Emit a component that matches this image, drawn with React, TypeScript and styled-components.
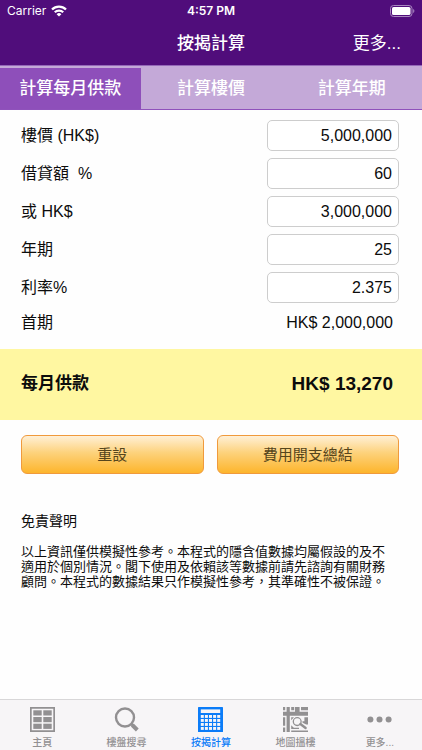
import React, { useState } from "react";
import styled, { createGlobalStyle } from "styled-components";

const GlobalStyle = createGlobalStyle`
  *, *::before, *::after { box-sizing: border-box; }
  body {
    margin: 0;
    background: #fefefe;
    color: #0c0c0c;
    font-family: "Liberation Sans", "Noto Sans CJK TC", sans-serif;
  }
  button, input { font-family: inherit; margin: 0; }
`;

const Page = styled.div`
  display: flex;
  flex-direction: column;
  min-height: 100vh;
`;

const Header = styled.header`
  background: #500d7b;
  color: #fff;
`;

const StatusBar = styled.div`
  display: grid;
  grid-template-columns: 1fr auto 1fr;
  align-items: center;
  height: 22px;
  padding: 0 7px;
  font: 500 12px/22px Inter, sans-serif;
`;

const Carrier = styled.div`
  display: flex;
  align-items: center;
  gap: 5px;
  font-weight: 400;
`;

const Clock = styled.div`
  font-weight: 600;
`;

const BatteryIcon = styled.svg`
  justify-self: end;
`;

const NavBar = styled.div`
  display: grid;
  grid-template-columns: 1fr auto 1fr;
  align-items: center;
  height: 43px;
  padding: 0 21px;
`;

const Title = styled.h1`
  grid-column: 2;
  margin: 0;
  font-size: 17px;
  line-height: 24px;
  font-weight: 500;
`;

const MoreButton = styled.button`
  justify-self: end;
  padding: 0;
  border: 0;
  background: none;
  color: #fff;
  font-size: 17px;
  line-height: 24px;
`;

const Segments = styled.div`
  display: grid;
  grid-template-columns: repeat(3, 1fr);
  height: 45px;
  padding-top: 2px;
  background: #c4a9d8;
  border-top: 1px solid #9467b8;
  border-bottom: 1px solid #8f52bb;
`;

const Segment = styled.button<{ $active: boolean }>`
  padding: 0;
  border: 0;
  background: ${(p) => (p.$active ? "#8e4fba" : "transparent")};
  color: #fff;
  font-size: 17px;
  line-height: 24px;
  font-weight: 500;
`;

const Form = styled.form`
  display: grid;
  gap: 7px;
  padding: 10px 23px 13px 21px;
`;

const Row = styled.div`
  display: grid;
  grid-template-columns: 13fr 7fr;
  align-items: center;
  min-height: 31px;
  font-size: 16px;
  line-height: 24px;
`;

const RowLabel = styled.label`
  white-space: pre;
`;

const Field = styled.input`
  width: 100%;
  height: 31px;
  padding: 0 6px;
  border: 1px solid #cdcdcd;
  border-radius: 5px;
  background: #fff;
  color: #0c0c0c;
  font-size: 16px;
  text-align: right;
`;

const SummaryRow = styled.div`
  display: flex;
  align-items: center;
  justify-content: space-between;
  height: 26px;
  padding-right: 6px;
  font-size: 16px;
  line-height: 24px;
`;

const Result = styled.section`
  display: flex;
  align-items: center;
  justify-content: space-between;
  height: 71px;
  padding: 0 29px 2px 21px;
  background: #fff7a1;
  font-weight: 700;
`;

const ResultLabel = styled.span`
  font-size: 17px;
  line-height: 24px;
  font-weight: 700;
`;

const ResultValue = styled.output`
  font-size: 19px;
  line-height: 24px;
`;

const Actions = styled.div`
  display: grid;
  grid-template-columns: 1fr 1fr;
  gap: 13px;
  padding: 15px 23px 0 21px;
`;

const ActionButton = styled.button`
  height: 39px;
  padding: 0;
  border: 1px solid #f09a3c;
  border-radius: 6px;
  background: linear-gradient(#fff0d6, #fdd27c 45%, #fdb52c);
  color: #56451c;
  font-size: 15px;
  line-height: 24px;
`;

const Disclaimer = styled.section`
  flex: 1;
  padding: 37px 31px 16px 21px;
`;

const DisclaimerTitle = styled.h2`
  margin: 0 0 13px;
  font-size: 14px;
  line-height: 20px;
  font-weight: 400;
`;

const DisclaimerText = styled.p`
  margin: 0;
  font-size: 13px;
  line-height: 15px;
`;

const TabBar = styled.nav`
  display: grid;
  grid-template-columns: repeat(5, 1fr);
  height: 51px;
  border-top: 1px solid #d8d7d8;
  background: #f7f5f7;
`;

const TabItem = styled.a<{ $active: boolean }>`
  display: flex;
  flex-direction: column;
  align-items: center;
  gap: 3px;
  padding-top: 7px;
  color: ${(p) => (p.$active ? "#0b7cf8" : "#929092")};
  font-size: 10px;
  line-height: 15px;
  font-weight: 500;
  text-decoration: none;
`;

const WifiIcon = () => (
  <svg width="16" height="12" viewBox="0 0 16 12" fill="none" stroke="#fff" strokeWidth="2.3" aria-hidden="true">
    <path d="M1 4.5a10 10 0 0 1 14 0" />
    <path d="M3.8 7.3a6 6 0 0 1 8.4 0" />
    <path d="M8 11.6 5.6 9.2a3.5 3.5 0 0 1 4.8 0Z" fill="#fff" stroke="none" />
  </svg>
);

const Battery = () => (
  <BatteryIcon width="25" height="12" viewBox="0 0 25 12" aria-hidden="true">
    <rect x="0.5" y="0.5" width="21.5" height="11" rx="3" fill="none" stroke="#a887bf" />
    <rect x="2" y="2" width="18.5" height="8" rx="1.6" fill="#fff" />
    <path d="M23.2 4v4c1.6-.6 1.6-3.4 0-4Z" fill="#a887bf" />
  </BatteryIcon>
);

const HomeIcon = () => (
  <svg width="25" height="25" viewBox="0 0 25 25" fill="currentColor" aria-hidden="true">
    <path d="M0 0h25v25H0ZM1.7 1.7v21.6h21.6V1.7Z" fillRule="evenodd" />
    {[3.3, 10, 16.7].map((y) => (
      <g key={y}>
        <rect x="3.3" y={y} width="8.4" height="5.2" />
        <rect x="13.3" y={y} width="8.4" height="5.2" />
      </g>
    ))}
  </svg>
);

const SearchIcon = () => (
  <svg width="25" height="25" viewBox="0 0 25 25" fill="none" stroke="currentColor" aria-hidden="true">
    <circle cx="11" cy="10.5" r="9" strokeWidth="2.4" />
    <path d="m17.2 16.8 1.8 1.8" strokeWidth="2.6" />
    <path d="m18.3 18 5 5" strokeWidth="4" />
  </svg>
);

const CalculatorIcon = () => (
  <svg width="25" height="25" viewBox="0 0 25 25" aria-hidden="true">
    <rect width="25" height="25" rx="0.6" fill="currentColor" />
    <rect x="2.8" y="2.4" width="19.4" height="3.6" fill="#f7f5f7" />
    {[8, 12, 16, 20].map((y) =>
      [2.8, 6.9, 11, 15.1, 19.2].map((x) => (
        <rect key={`${x}-${y}`} x={x} y={y} width="3" height="2.9" fill="#f7f5f7" />
      )),
    )}
  </svg>
);

const MapIcon = () => (
  <svg width="25" height="25" viewBox="0 0 25 25" fill="currentColor" aria-hidden="true">
    <path d="M0 0h2.2v3.2H0ZM3.6 0h3.2v25H3.6ZM8.2 0h3v3.2h-3ZM12 0h4.6v5H12ZM18 0h7v3.2h-7ZM0 4.7h25v4H0ZM0 10.2h2.2v8.6H0ZM0 20.4h2.2V25H0Z" />
    <path d="M8.2 10.2H11l-2.8 3ZM8.2 18.2l2.6 2.6H16V22H8.2ZM8.2 23.4H25V25H8.2ZM19.4 14.2h2V10.2H25v7.2h-1.8l-3.6-1.6Z" />
    <circle cx="14.2" cy="14.6" r="3.9" fill="none" stroke="currentColor" strokeWidth="1.3" />
    <path d="m17.4 17 5.2 4" fill="none" stroke="currentColor" strokeWidth="2.4" strokeLinecap="round" />
  </svg>
);

const MoreIcon = () => (
  <svg width="25" height="25" viewBox="0 0 25 25" fill="currentColor" aria-hidden="true">
    <circle cx="3.4" cy="12.5" r="3" />
    <circle cx="12.5" cy="12.5" r="3" />
    <circle cx="21.6" cy="12.5" r="3" />
  </svg>
);

const segments = ["計算每月供款", "計算樓價", "計算年期"];

const fields = [
  { id: "price", label: "樓價 (HK$)", value: "5,000,000" },
  { id: "percent", label: "借貸額  %", value: "60" },
  { id: "amount", label: "或 HK$", value: "3,000,000" },
  { id: "years", label: "年期", value: "25" },
  { id: "rate", label: "利率%", value: "2.375" },
];

const tabs = [
  { id: "home", label: "主頁", Icon: HomeIcon },
  { id: "search", label: "樓盤搜尋", Icon: SearchIcon },
  { id: "mortgage", label: "按揭計算", Icon: CalculatorIcon },
  { id: "map", label: "地圖搵樓", Icon: MapIcon },
  { id: "more", label: "更多...", Icon: MoreIcon },
];

export default function App() {
  const [segment, setSegment] = useState(0);

  return (
    <Page lang="zh-Hant">
      <GlobalStyle />
      <Header>
        <StatusBar>
          <Carrier>
            Carrier
            <WifiIcon />
          </Carrier>
          <Clock>4:57 PM</Clock>
          <Battery />
        </StatusBar>
        <NavBar>
          <Title>按揭計算</Title>
          <MoreButton type="button">更多...</MoreButton>
        </NavBar>
      </Header>
      <Segments>
        {segments.map((label, i) => (
          <Segment key={label} type="button" $active={i === segment} aria-pressed={i === segment} onClick={() => setSegment(i)}>
            {label}
          </Segment>
        ))}
      </Segments>
      <main>
        <Form id="mortgage-form">
          {fields.map((f) => (
            <Row key={f.id}>
              <RowLabel htmlFor={f.id}>{f.label}</RowLabel>
              <Field id={f.id} type="text" inputMode="decimal" defaultValue={f.value} />
            </Row>
          ))}
          <SummaryRow>
            <span>首期</span>
            <span>HK$ 2,000,000</span>
          </SummaryRow>
        </Form>
        <Result>
          <ResultLabel>每月供款</ResultLabel>
          <ResultValue>HK$ 13,270</ResultValue>
        </Result>
        <Actions>
          <ActionButton type="reset" form="mortgage-form">重設</ActionButton>
          <ActionButton type="button">費用開支總結</ActionButton>
        </Actions>
      </main>
      <Disclaimer>
        <DisclaimerTitle>免責聲明</DisclaimerTitle>
        <DisclaimerText>
          以上資訊僅供模擬性參考。本程式的隱含值數據均屬假設的及不適用於個別情況。閣下使用及依賴該等數據前請先諮詢有關財務顧問。本程式的數據結果只作模擬性參考，其準確性不被保證。
        </DisclaimerText>
      </Disclaimer>
      <TabBar>
        {tabs.map(({ id, label, Icon }) => (
          <TabItem key={id} href={`#${id}`} $active={id === "mortgage"}>
            <Icon />
            {label}
          </TabItem>
        ))}
      </TabBar>
    </Page>
  );
}
